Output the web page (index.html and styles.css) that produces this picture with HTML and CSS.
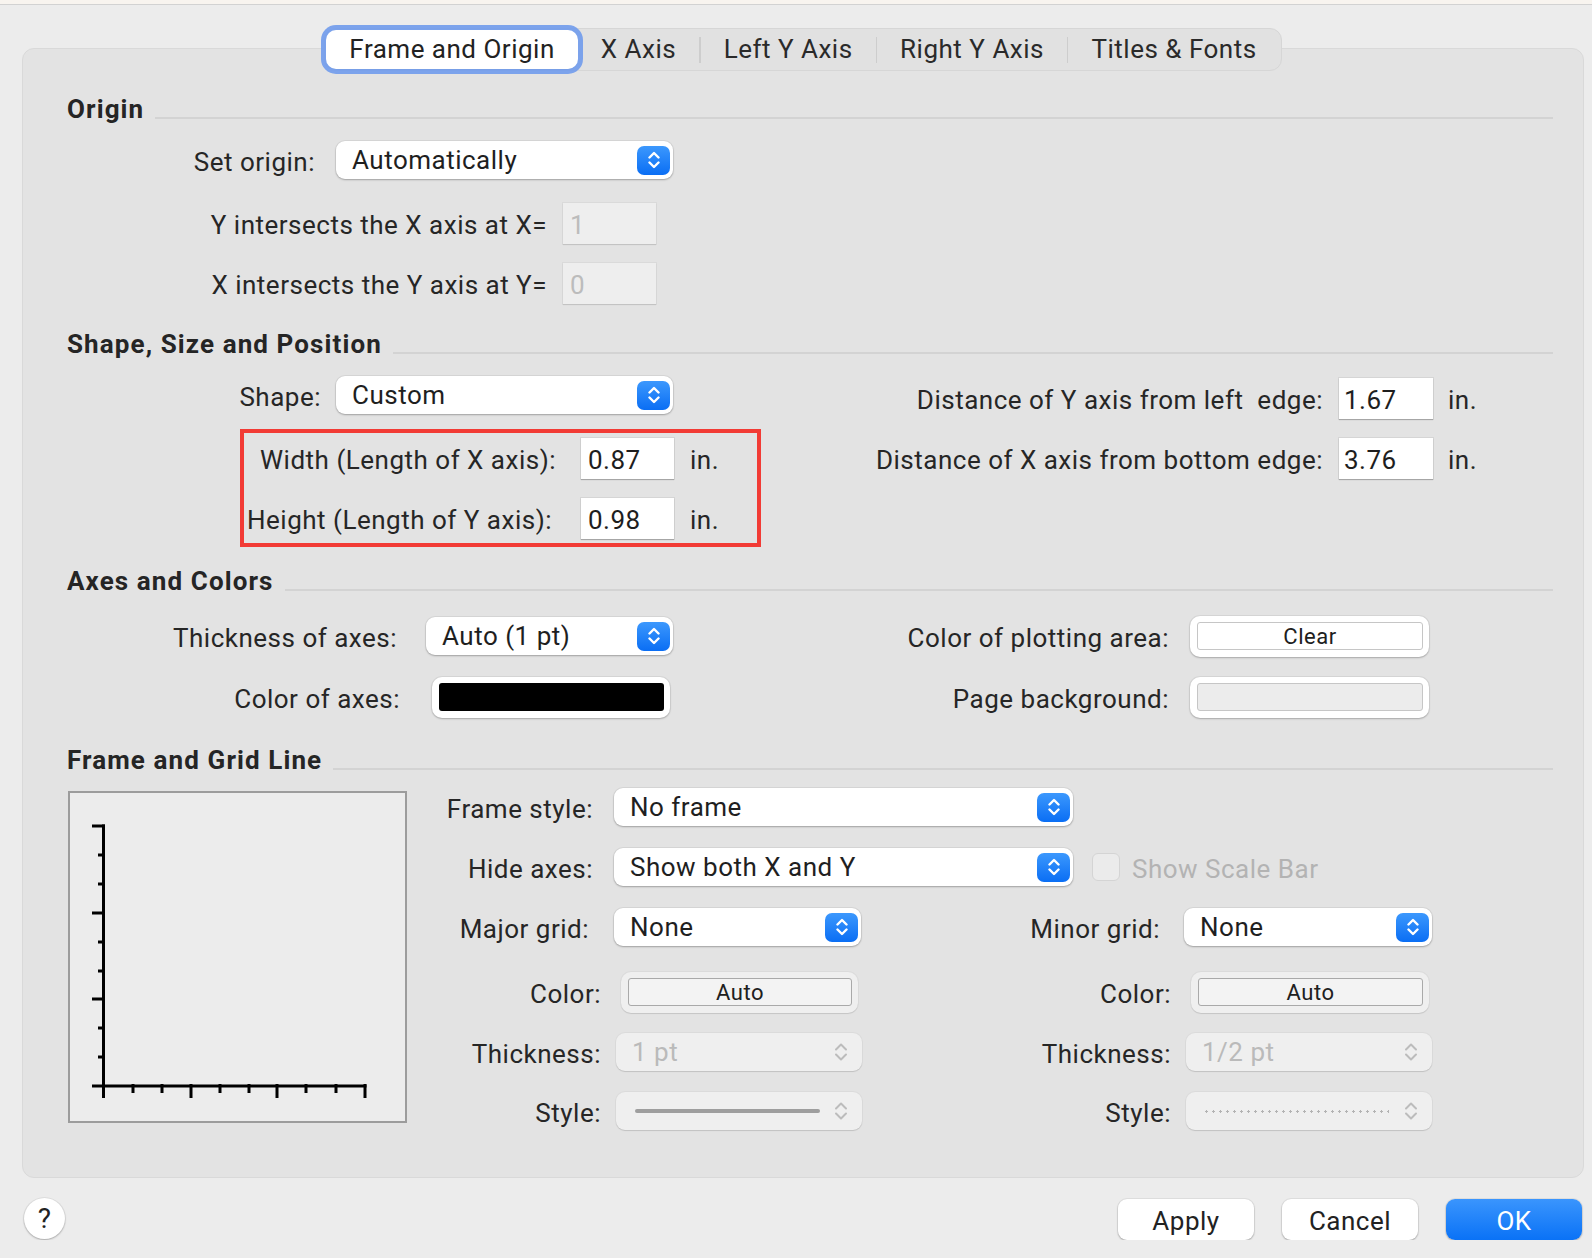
FILE: index.html
```html
<!DOCTYPE html>
<html>
<head>
<meta charset="utf-8">
<title>Frame and Origin</title>
<link rel="stylesheet" href="styles.css">
</head>
<body>
<div class="topbar"></div>
<div class="dialog">
  <div class="tabrow">
    <div class="tabs">
      <div class="tab selected">Frame and Origin</div>
      <div class="tab">X Axis</div><span class="sep"></span>
      <div class="tab">Left Y Axis</div><span class="sep"></span>
      <div class="tab">Right Y Axis</div><span class="sep"></span>
      <div class="tab">Titles &amp; Fonts</div>
    </div>
  </div>

  <div class="panel">
    <!-- Origin -->
    <div class="sechead"><span>Origin</span><i class="rule"></i></div>
    <div class="row mt-14">
      <span class="lbl w-248">Set origin:</span>
      <div class="popup ml-21 w-337"><span>Automatically</span><span class="stepper"><svg width="12" height="18" viewBox="0 0 12 18"><path d="M1.5 6.5 L6 2 L10.5 6.5 M1.5 11.5 L6 16 L10.5 11.5" /></svg></span></div>
    </div>
    <div class="row mt-21">
      <span class="lbl w-480">Y intersects the X axis at X=</span>
      <div class="field disabled ml-16">1</div>
    </div>
    <div class="row mt-18">
      <span class="lbl w-480">X intersects the Y axis at Y=</span>
      <div class="field disabled ml-16">0</div>
    </div>

    <!-- Shape -->
    <div class="sechead mt-24"><span>Shape, Size and Position</span><i class="rule"></i></div>
    <div class="shape">
      <div class="shape-left">
        <div class="row mt-14">
          <span class="lbl w-254">Shape:</span>
          <div class="popup ml-15 w-337"><span>Custom</span><span class="stepper"><svg width="12" height="18" viewBox="0 0 12 18"><path d="M1.5 6.5 L6 2 L10.5 6.5 M1.5 11.5 L6 16 L10.5 11.5" /></svg></span></div>
        </div>
        <div class="highlight">
          <div class="row">
            <span class="lbl w-312">Width (Length of X axis):</span>
            <div class="field ml-25">0.87</div>
            <span class="unit">in.</span>
          </div>
          <div class="row mt-18">
            <span class="lbl w-308">Height (Length of Y axis):</span>
            <div class="field ml-29">0.98</div>
            <span class="unit">in.</span>
          </div>
        </div>
      </div>
      <div class="shape-right">
        <div class="row">
          <span class="lbl w-562">Distance of Y axis from left&nbsp; edge:</span>
          <div class="field wide ml-16">1.67</div>
          <span class="unit u-15">in.</span>
        </div>
        <div class="row mt-18">
          <span class="lbl w-562">Distance of X axis from bottom edge:</span>
          <div class="field wide ml-16">3.76</div>
          <span class="unit u-15">in.</span>
        </div>
      </div>
    </div>

    <!-- Axes and Colors -->
    <div class="sechead mt-18"><span>Axes and Colors</span><i class="rule"></i></div>
    <div class="row mt-18">
      <span class="lbl w-330">Thickness of axes:</span>
      <div class="popup ml-29 w-247"><span>Auto (1 pt)</span><span class="stepper"><svg width="12" height="18" viewBox="0 0 12 18"><path d="M1.5 6.5 L6 2 L10.5 6.5 M1.5 11.5 L6 16 L10.5 11.5" /></svg></span></div>
      <span class="lbl w-496">Color of plotting area:</span>
      <div class="well ml-21 w-239"><div class="swatch clear">Clear</div></div>
    </div>
    <div class="row mt-19">
      <span class="lbl w-333">Color of axes:</span>
      <div class="well ml-32 w-238"><div class="swatch black"></div></div>
      <span class="lbl w-499">Page background:</span>
      <div class="well ml-21 w-239"><div class="swatch page"></div></div>
    </div>

    <!-- Frame and Grid Line -->
    <div class="sechead mt-26"><span>Frame and Grid Line</span><i class="rule"></i></div>
    <div class="frame">
      <div class="preview">
        <svg width="335" height="328" viewBox="0 0 335 328">
          <g stroke="#000" stroke-width="3" fill="none">
            <path d="M33.5 31.5 V294.5" />
            <path d="M22 293 H296.5" />
            <path d="M22 33 H35 M22 120 H35 M22 206 H35" />
            <path d="M28 62 H35 M28 91 H35 M28 149 H35 M28 178 H35 M28 235 H35 M28 264 H35" />
            <path d="M33.5 291 V305 M121 291 V305 M207 291 V305 M295 291 V305" />
            <path d="M63 291 V300 M92 291 V300 M150 291 V300 M179 291 V300 M236 291 V300 M266 291 V300" />
          </g>
        </svg>
      </div>
      <div class="frame-rows">
        <div class="row">
          <span class="lbl w-186">Frame style:</span>
          <div class="popup ml-21 w-459"><span>No frame</span><span class="stepper"><svg width="12" height="18" viewBox="0 0 12 18"><path d="M1.5 6.5 L6 2 L10.5 6.5 M1.5 11.5 L6 16 L10.5 11.5" /></svg></span></div>
        </div>
        <div class="row mt-18">
          <span class="lbl w-186">Hide axes:</span>
          <div class="popup ml-21 w-459"><span>Show both X and Y</span><span class="stepper"><svg width="12" height="18" viewBox="0 0 12 18"><path d="M1.5 6.5 L6 2 L10.5 6.5 M1.5 11.5 L6 16 L10.5 11.5" /></svg></span></div>
          <span class="check"></span>
          <span class="check-label">Show Scale Bar</span>
        </div>
        <div class="row mt-18">
          <span class="lbl w-182">Major grid:</span>
          <div class="popup ml-25 w-247"><span>None</span><span class="stepper"><svg width="12" height="18" viewBox="0 0 12 18"><path d="M1.5 6.5 L6 2 L10.5 6.5 M1.5 11.5 L6 16 L10.5 11.5" /></svg></span></div>
          <span class="lbl w-299">Minor grid:</span>
          <div class="popup ml-24 w-248"><span>None</span><span class="stepper"><svg width="12" height="18" viewBox="0 0 12 18"><path d="M1.5 6.5 L6 2 L10.5 6.5 M1.5 11.5 L6 16 L10.5 11.5" /></svg></span></div>
        </div>
        <div class="row mt-23">
          <span class="lbl w-194">Color:</span>
          <div class="well off ml-20 w-237"><div class="swatch auto">Auto</div></div>
          <span class="lbl w-313">Color:</span>
          <div class="well off ml-20 w-238"><div class="swatch auto">Auto</div></div>
        </div>
        <div class="row mt-18">
          <span class="lbl w-194">Thickness:</span>
          <div class="popup disabled ml-15 w-246"><span>1 pt</span><span class="stepper plain"><svg width="14" height="20" viewBox="0 0 14 20"><path d="M2 7.5 L7 2.5 L12 7.5 M2 12.5 L7 17.5 L12 12.5" /></svg></span></div>
          <span class="lbl w-309">Thickness:</span>
          <div class="popup disabled ml-15 w-246"><span>1/2 pt</span><span class="stepper plain"><svg width="14" height="20" viewBox="0 0 14 20"><path d="M2 7.5 L7 2.5 L12 7.5 M2 12.5 L7 17.5 L12 12.5" /></svg></span></div>
        </div>
        <div class="row mt-17">
          <span class="lbl w-194">Style:</span>
          <div class="popup disabled ml-15 w-246"><span class="solid-line"></span><span class="stepper plain"><svg width="14" height="20" viewBox="0 0 14 20"><path d="M2 7.5 L7 2.5 L12 7.5 M2 12.5 L7 17.5 L12 12.5" /></svg></span></div>
          <span class="lbl w-309">Style:</span>
          <div class="popup disabled ml-15 w-246"><span class="dotted-line"></span><span class="stepper plain"><svg width="14" height="20" viewBox="0 0 14 20"><path d="M2 7.5 L7 2.5 L12 7.5 M2 12.5 L7 17.5 L12 12.5" /></svg></span></div>
        </div>
      </div>
    </div>
  </div>

  <div class="footer">
    <div class="help">?</div>
    <div class="buttons">
      <div class="btn">Apply</div>
      <div class="btn">Cancel</div>
      <div class="btn primary">OK</div>
    </div>
  </div>
</div>
</body>
</html>
```

FILE: styles.css
```css
* { box-sizing: border-box; }

html, body {
  margin: 0;
  padding: 0;
  background: #ececec;
  font-family: Roboto, "Liberation Sans", sans-serif;
  font-size: 26px;
  letter-spacing: 0.5px;
  color: #262626;
  overflow: hidden;
}

.topbar {
  height: 5px;
  background: #f8f4ef;
  border-bottom: 1px solid #d2d2d2;
}

.dialog {
  margin-left: 22px;
  width: 1562px;
}

/* ---------- tabs ---------- */
.tabrow {
  position: relative;
  z-index: 2;
  display: flex;
  justify-content: center;
  margin-top: 23px;
}

.tabs {
  display: inline-flex;
  align-items: center;
  height: 43px;
  padding: 1px;
  background: #e1e1e1;
  border: 1px solid #d6d6d6;
  border-radius: 12px;
}

.tab {
  height: 39px;
  line-height: 39px;
  padding: 0 23px;
  white-space: nowrap;
  color: #2a2a2a;
}

.tab.selected {
  background: #fff;
  border-radius: 10px;
  box-shadow: 0 0 0 5px rgba(112, 155, 236, 0.9), 0 1px 1px rgba(0, 0, 0, 0.2);
  color: #222;
}

.sep {
  width: 1.5px;
  height: 26px;
  background: #cdcdcd;
}

/* ---------- panel ---------- */
.panel {
  margin-top: -23px;
  background: #e3e3e3;
  border: 1px solid #d9d9d9;
  border-radius: 12px;
  padding: 44px 30px 45px 44px;
}

.sechead {
  display: flex;
  align-items: center;
  height: 32px;
  font-weight: 700;
  letter-spacing: 1.1px;
  color: #252525;
  white-space: nowrap;
}

.rule {
  flex: 1;
  height: 2px;
  background: #d3d3d3;
  margin: 18px 0 0 11px;
}

.row {
  display: flex;
  align-items: center;
  height: 42px;
}

.lbl {
  flex: none;
  display: flex;
  justify-content: flex-end;
  padding-top: 3px;
  white-space: nowrap;
}

.unit { margin-left: 16px; padding-top: 3px; }
.unit.u-15 { margin-left: 15px; }

/* spacing helpers */
.mt-14 { margin-top: 14px; }
.mt-17 { margin-top: 17px; }
.mt-18 { margin-top: 18px; }
.mt-19 { margin-top: 19px; }
.mt-21 { margin-top: 21px; }
.mt-23 { margin-top: 23px; }
.mt-24 { margin-top: 24px; }
.mt-26 { margin-top: 26px; }

.ml-15 { margin-left: 15px; }
.ml-16 { margin-left: 16px; }
.ml-20 { margin-left: 20px; }
.ml-21 { margin-left: 21px; }
.ml-24 { margin-left: 24px; }
.ml-25 { margin-left: 25px; }
.ml-29 { margin-left: 29px; }
.ml-32 { margin-left: 32px; }

.w-182 { width: 182px; }
.w-186 { width: 186px; }
.w-194 { width: 194px; }
.w-237 { width: 237px; }
.w-238 { width: 238px; }
.w-239 { width: 239px; }
.w-246 { width: 246px; }
.w-247 { width: 247px; }
.w-248 { width: 248px; }
.w-254 { width: 254px; }
.w-299 { width: 299px; }
.w-308 { width: 308px; }
.w-309 { width: 309px; }
.w-312 { width: 312px; }
.w-313 { width: 313px; }
.w-330 { width: 330px; }
.w-333 { width: 333px; }
.w-337 { width: 337px; }
.w-459 { width: 459px; }
.w-480 { width: 480px; }
.w-496 { width: 496px; }
.w-499 { width: 499px; }
.w-562 { width: 562px; }

/* ---------- popup buttons ---------- */
.popup {
  flex: none;
  display: flex;
  align-items: center;
  justify-content: space-between;
  height: 38px;
  padding: 0 3px 0 16px;
  background: #fff;
  border-radius: 9px;
  box-shadow: 0 0 0 1px rgba(0, 0, 0, 0.05), 0 1px 2px rgba(0, 0, 0, 0.25);
  color: #1f1f1f;
  white-space: nowrap;
}

.stepper {
  display: flex;
  align-items: center;
  justify-content: center;
  width: 33px;
  height: 29px;
  border-radius: 7px;
  background: linear-gradient(#3c98fd, #0a6ef4);
}

.stepper svg path {
  fill: none;
  stroke: #fff;
  stroke-width: 2.4;
  stroke-linecap: round;
  stroke-linejoin: round;
}

.popup.disabled {
  background: #efefef;
  box-shadow: 0 0 0 1px rgba(0, 0, 0, 0.03), 0 1px 1px rgba(0, 0, 0, 0.12);
  color: #bababa;
}

.stepper.plain {
  background: none;
  margin-right: 2px;
}

.stepper.plain svg path {
  stroke: #bcbcbc;
  stroke-width: 2;
}

.solid-line {
  display: block;
  width: 185px;
  height: 4px;
  margin-left: 3px;
  border-radius: 2px;
  background: #9e9e9e;
}

.dotted-line {
  display: block;
  width: 186px;
  height: 3px;
  margin-left: 1px;
  background-image: radial-gradient(circle, #b3b3b3 1px, transparent 1.4px);
  background-size: 7px 3px;
}

/* ---------- text fields ---------- */
.field {
  flex: none;
  display: flex;
  align-items: center;
  width: 93px;
  height: 41px;
  padding: 3px 0 0 7px;
  background: #fff;
  box-shadow: 0 0 0 1px rgba(0, 0, 0, 0.06), 0 1px 1px rgba(0, 0, 0, 0.22);
  color: #1e1e1e;
}

.field.wide { width: 94px; padding-left: 5px; }

.field.disabled {
  background: #eeeeee;
  color: #bcbcbc;
  box-shadow: 0 0 0 1px rgba(0, 0, 0, 0.04), 0 1px 1px rgba(0, 0, 0, 0.1);
}

/* ---------- shape section ---------- */
.shape {
  display: flex;
}

.shape-left {
  width: 694px;
  flex: none;
}

.shape-right {
  flex: 1;
  padding-top: 17px;
}

.highlight {
  margin: 13px 0 0 173px;
  width: 521px;
  border: 4px solid #f23b35;
  padding: 4px 0;
}

/* ---------- color wells ---------- */
.well {
  flex: none;
  display: flex;
  height: 41px;
  padding: 6px 6px 7px 7px;
  background: #fff;
  border-radius: 10px;
  box-shadow: 0 0 0 1px rgba(0, 0, 0, 0.05), 0 1px 2px rgba(0, 0, 0, 0.22);
}

.well.off {
  background: #efefef;
  box-shadow: 0 0 0 1px rgba(0, 0, 0, 0.03), 0 1px 1px rgba(0, 0, 0, 0.1);
}

.swatch {
  flex: 1;
  display: flex;
  align-items: center;
  justify-content: center;
  padding-top: 2px;
  border-radius: 3px;
  font-size: 22px;
  color: #202020;
}

.swatch.black { background: #000; }
.swatch.clear { background: #fff; border: 1px solid #c6c6c6; }
.swatch.page { background: #ececec; border: 1px solid #c6c6c6; }
.swatch.auto { background: #f3f3f3; border: 1px solid #a9a9a9; }

/* ---------- frame section ---------- */
.frame {
  display: flex;
  align-items: flex-start;
}

.preview {
  flex: none;
  margin: 15px 0 0 1px;
  width: 339px;
  height: 332px;
  border: 2px solid #9c9c9c;
  background: #ececec;
}

.preview svg { display: block; }

.frame-rows {
  margin-top: 10px;
}

.check {
  flex: none;
  width: 28px;
  height: 28px;
  margin-left: 19px;
  border-radius: 6px;
  background: #ebebeb;
  border: 1px solid #d4d4d4;
}

.check-label {
  margin-left: 12px;
  padding-top: 3px;
  color: #b3b3b3;
  white-space: nowrap;
}

/* ---------- footer ---------- */
.footer {
  display: flex;
  align-items: center;
  margin-top: 21px;
  padding: 0 2px;
}

.help {
  width: 41px;
  height: 41px;
  margin-top: -2px;
  border-radius: 50%;
  background: #fff;
  box-shadow: 0 0 0 1px rgba(0, 0, 0, 0.05), 0 1px 2px rgba(0, 0, 0, 0.25);
  display: flex;
  align-items: center;
  justify-content: center;
  font-size: 28px;
  color: #222;
}

.buttons {
  margin-left: auto;
  display: flex;
  gap: 28px;
}

.btn {
  width: 136px;
  height: 41px;
  border-radius: 9px;
  background: #fff;
  box-shadow: 0 0 0 1px rgba(0, 0, 0, 0.05), 0 1px 2px rgba(0, 0, 0, 0.25);
  display: flex;
  align-items: center;
  justify-content: center;
  padding-top: 2px;
  color: #222;
}

.btn.primary {
  background: linear-gradient(#3a95fd, #0a72f6);
  color: #fff;
}
```
